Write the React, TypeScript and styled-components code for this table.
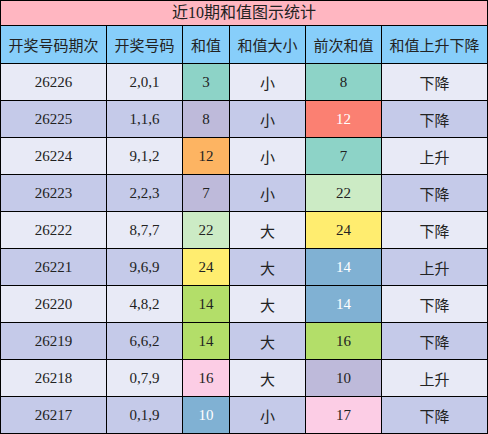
import React, { FC } from 'react';
import styled, { createGlobalStyle } from 'styled-components';

const GlobalStyle = createGlobalStyle`
  html, body {
    margin: 0;
    padding: 0;
    background: #ffffff;
  }
`;

const SET3 = {
  teal: '#8dd3c7',
  lavender: '#bebada',
  salmon: '#fb8072',
  blue: '#80b1d3',
  orange: '#fdb462',
  green: '#b3de69',
  pink: '#fccde5',
  mint: '#ccebc5',
  yellow: '#ffed6f',
};

type Tone = keyof typeof SET3;

interface Row {
  issue: string;
  nums: string;
  sum: number;
  sumTone: Tone;
  size: string;
  prev: number;
  prevTone: Tone;
  trend: string;
}

const rows: Row[] = [
  { issue: '26226', nums: '2,0,1', sum: 3, sumTone: 'teal', size: '小', prev: 8, prevTone: 'teal', trend: '下降' },
  { issue: '26225', nums: '1,1,6', sum: 8, sumTone: 'lavender', size: '小', prev: 12, prevTone: 'salmon', trend: '下降' },
  { issue: '26224', nums: '9,1,2', sum: 12, sumTone: 'orange', size: '小', prev: 7, prevTone: 'teal', trend: '上升' },
  { issue: '26223', nums: '2,2,3', sum: 7, sumTone: 'lavender', size: '小', prev: 22, prevTone: 'mint', trend: '下降' },
  { issue: '26222', nums: '8,7,7', sum: 22, sumTone: 'mint', size: '大', prev: 24, prevTone: 'yellow', trend: '下降' },
  { issue: '26221', nums: '9,6,9', sum: 24, sumTone: 'yellow', size: '大', prev: 14, prevTone: 'blue', trend: '上升' },
  { issue: '26220', nums: '4,8,2', sum: 14, sumTone: 'green', size: '大', prev: 14, prevTone: 'blue', trend: '下降' },
  { issue: '26219', nums: '6,6,2', sum: 14, sumTone: 'green', size: '大', prev: 16, prevTone: 'green', trend: '下降' },
  { issue: '26218', nums: '0,7,9', sum: 16, sumTone: 'pink', size: '大', prev: 10, prevTone: 'lavender', trend: '上升' },
  { issue: '26217', nums: '0,1,9', sum: 10, sumTone: 'blue', size: '小', prev: 17, prevTone: 'pink', trend: '下降' },
];

const whiteText: Tone[] = ['salmon', 'blue'];

const Board = styled.div`
  display: grid;
  grid-template-columns: 105px 75px 46px 75px 75px 105px;
  grid-template-rows: 24px 37px repeat(10, 36px);
  gap: 1px;
  padding: 1px;
  width: 488px;
  box-sizing: border-box;
  background: #000;
  font-family: "Liberation Serif", "Noto Sans CJK SC", serif;
  color: #222;
`;

const Title = styled.div`
  grid-column: 1 / -1;
  display: flex;
  align-items: center;
  justify-content: center;
  background: #ffb6c1;
  font-family: "Liberation Serif", "Noto Sans CJK SC", sans-serif;
  font-size: 16px;
  line-height: 1;
`;

const Head = styled.div`
  display: flex;
  align-items: center;
  justify-content: center;
  background: #87cefa;
  font-family: "Noto Sans CJK SC", sans-serif;
  font-size: 15px;
  white-space: nowrap;
`;

const Cell = styled.div<{ $bg: string; $light?: boolean; $cjk?: boolean }>`
  display: flex;
  align-items: center;
  justify-content: center;
  background: ${p => p.$bg};
  color: ${p => (p.$light ? '#ffffff' : '#222')};
  font-family: ${p => (p.$cjk ? '"Noto Sans CJK SC", sans-serif' : '"Liberation Serif", serif')};
  font-size: 15px;
`;

const heads = ['开奖号码期次', '开奖号码', '和值', '和值大小', '前次和值', '和值上升下降'];

const App: FC = () => (
  <>
    <GlobalStyle />
    <Board>
      <Title>近10期和值图示统计</Title>
      {heads.map(h => <Head key={h}>{h}</Head>)}
      {rows.map((r, i) => {
        const base = i % 2 === 0 ? '#e8eaf6' : '#c5cae9';
        return (
          <React.Fragment key={r.issue}>
            <Cell $bg={base}>{r.issue}</Cell>
            <Cell $bg={base}>{r.nums}</Cell>
            <Cell $bg={SET3[r.sumTone]} $light={whiteText.includes(r.sumTone)}>{r.sum}</Cell>
            <Cell $bg={base} $cjk>{r.size}</Cell>
            <Cell $bg={SET3[r.prevTone]} $light={whiteText.includes(r.prevTone)}>{r.prev}</Cell>
            <Cell $bg={base} $cjk>{r.trend}</Cell>
          </React.Fragment>
        );
      })}
    </Board>
  </>
);

export default App;
